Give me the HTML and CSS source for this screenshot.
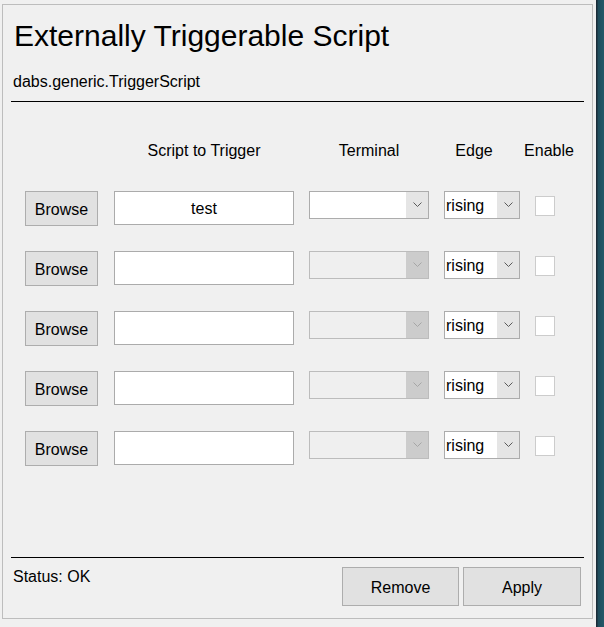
FILE: index.html
```html
<!DOCTYPE html>
<html>
<head>
<meta charset="utf-8">
<title>Externally Triggerable Script</title>
<link rel="stylesheet" href="styles.css">
</head>
<body>
<div class="window">
  <div class="title">Externally Triggerable Script</div>
  <div class="subtitle">dabs.generic.TriggerScript</div>
  <div class="rule"></div>

  <div class="headers">
    <div class="h h-script">Script to Trigger</div>
    <div class="h h-terminal">Terminal</div>
    <div class="h h-edge">Edge</div>
    <div class="h h-enable">Enable</div>
  </div>

  <div class="rows">
    <button class="btn browse">Browse</button>
    <input class="field" type="text" value="test">
    <div class="combo"><span class="combo-text"></span><span class="combo-arrow"><svg width="9" height="5" viewBox="0 0 9 5"><path d="M0.5 0.5 L4.5 4.5 L8.5 0.5" fill="none" stroke="#5a5a5a" stroke-width="1"/></svg></span></div>
    <div class="combo"><span class="combo-text">rising</span><span class="combo-arrow"><svg width="9" height="5" viewBox="0 0 9 5"><path d="M0.5 0.5 L4.5 4.5 L8.5 0.5" fill="none" stroke="#5a5a5a" stroke-width="1"/></svg></span></div>
    <input class="check" type="checkbox">

    <button class="btn browse">Browse</button>
    <input class="field" type="text" value="">
    <div class="combo disabled"><span class="combo-text"></span><span class="combo-arrow"><svg width="9" height="5" viewBox="0 0 9 5"><path d="M0.5 0.5 L4.5 4.5 L8.5 0.5" fill="none" stroke="#a6a6a6" stroke-width="1"/></svg></span></div>
    <div class="combo"><span class="combo-text">rising</span><span class="combo-arrow"><svg width="9" height="5" viewBox="0 0 9 5"><path d="M0.5 0.5 L4.5 4.5 L8.5 0.5" fill="none" stroke="#5a5a5a" stroke-width="1"/></svg></span></div>
    <input class="check" type="checkbox">

    <button class="btn browse">Browse</button>
    <input class="field" type="text" value="">
    <div class="combo disabled"><span class="combo-text"></span><span class="combo-arrow"><svg width="9" height="5" viewBox="0 0 9 5"><path d="M0.5 0.5 L4.5 4.5 L8.5 0.5" fill="none" stroke="#a6a6a6" stroke-width="1"/></svg></span></div>
    <div class="combo"><span class="combo-text">rising</span><span class="combo-arrow"><svg width="9" height="5" viewBox="0 0 9 5"><path d="M0.5 0.5 L4.5 4.5 L8.5 0.5" fill="none" stroke="#5a5a5a" stroke-width="1"/></svg></span></div>
    <input class="check" type="checkbox">

    <button class="btn browse">Browse</button>
    <input class="field" type="text" value="">
    <div class="combo disabled"><span class="combo-text"></span><span class="combo-arrow"><svg width="9" height="5" viewBox="0 0 9 5"><path d="M0.5 0.5 L4.5 4.5 L8.5 0.5" fill="none" stroke="#a6a6a6" stroke-width="1"/></svg></span></div>
    <div class="combo"><span class="combo-text">rising</span><span class="combo-arrow"><svg width="9" height="5" viewBox="0 0 9 5"><path d="M0.5 0.5 L4.5 4.5 L8.5 0.5" fill="none" stroke="#5a5a5a" stroke-width="1"/></svg></span></div>
    <input class="check" type="checkbox">

    <button class="btn browse">Browse</button>
    <input class="field" type="text" value="">
    <div class="combo disabled"><span class="combo-text"></span><span class="combo-arrow"><svg width="9" height="5" viewBox="0 0 9 5"><path d="M0.5 0.5 L4.5 4.5 L8.5 0.5" fill="none" stroke="#a6a6a6" stroke-width="1"/></svg></span></div>
    <div class="combo"><span class="combo-text">rising</span><span class="combo-arrow"><svg width="9" height="5" viewBox="0 0 9 5"><path d="M0.5 0.5 L4.5 4.5 L8.5 0.5" fill="none" stroke="#5a5a5a" stroke-width="1"/></svg></span></div>
    <input class="check" type="checkbox">
  </div>

  <div class="footer">
    <div class="rule"></div>
    <div class="footer-row">
      <div class="status">Status: OK</div>
      <div class="actions">
        <button class="btn action">Remove</button>
        <button class="btn action">Apply</button>
      </div>
    </div>
  </div>
</div>
<div class="strip"></div>
</body>
</html>
```

FILE: styles.css
```css
html, body {
  margin: 0;
  padding: 0;
  background: #f0f0f0;
}

body {
  display: flex;
  align-items: flex-start;
  width: 604px;
  height: 627px;
  overflow: hidden;
  font-family: "Liberation Sans", Arial, sans-serif;
  font-size: 16px;
  color: #000;
}

.window {
  box-sizing: border-box;
  margin: 4px 0 0 2px;
  width: 591px;
  height: 615px;
  border: 1px solid #bdbdbd;
  display: flex;
  flex-direction: column;
  padding: 0 8px 12px 8px;
}

.strip {
  margin-left: 3px;
  width: 8px;
  height: 627px;
  background: linear-gradient(to right, #1b2c38 0, #1b2c38 1px, #1f4c5c 2px, #235868 100%);
}

.title {
  margin-top: 13px;
  padding-left: 3px;
  font-size: 30px;
  line-height: 35px;
}

.subtitle {
  margin-top: 20px;
  padding-left: 2px;
  line-height: 18px;
}

.rule {
  height: 1px;
  background: #000;
}

.window > .rule {
  margin-top: 10px;
}

.headers {
  display: flex;
  margin-top: 40px;
  line-height: 18px;
  padding-left: 103px;
}

.h {
  text-align: center;
  white-space: nowrap;
}

.h-script { width: 180px; }
.h-terminal { width: 120px; margin-left: 15px; }
.h-edge { width: 60px; margin-left: 15px; }
.h-enable { width: 50px; margin-left: 20px; }

.rows {
  display: grid;
  grid-template-columns: 74px 180px 120px 76px 20px;
  grid-auto-rows: 35px;
  column-gap: 15px;
  row-gap: 25px;
  margin-top: 31px;
  padding-left: 14px;
  align-items: start;
}

.btn {
  box-sizing: border-box;
  margin: 0;
  padding: 0;
  background: #e1e1e1;
  border: 1px solid #adadad;
  font-family: "Liberation Sans", Arial, sans-serif;
  font-size: 16px;
  color: #000;
}

.browse {
  width: 73px;
  height: 35px;
  padding-top: 2px;
}

.field {
  box-sizing: border-box;
  margin: 0;
  width: 180px;
  height: 34px;
  padding: 1px 0 0 0;
  border: 1px solid #ababab;
  background: #fff;
  text-align: center;
  font-family: "Liberation Sans", Arial, sans-serif;
  font-size: 16px;
  color: #000;
  outline: none;
}

.combo {
  box-sizing: border-box;
  height: 28px;
  border: 1px solid #acacac;
  background: #fff;
  display: flex;
}

.combo-text {
  flex: 1;
  padding: 2px 0 0 1px;
  line-height: 24px;
  white-space: nowrap;
}

.combo-arrow {
  width: 22px;
  background: #e5e5e5;
  display: flex;
  align-items: center;
  justify-content: center;
}

.combo-arrow svg {
  display: block;
  margin-top: -1px;
}

.combo.disabled {
  border-color: #bcbcbc;
  background: #efefef;
}

.combo.disabled .combo-arrow {
  background: #cccccc;
}

.check {
  -webkit-appearance: none;
  appearance: none;
  box-sizing: border-box;
  margin: 5px 0 0 0;
  width: 20px;
  height: 20px;
  border: 1px solid #cccccc;
  background: #fff;
}

.footer {
  margin-top: auto;
}

.footer-row {
  display: flex;
  justify-content: space-between;
  align-items: flex-start;
  margin-top: 9px;
}

.status {
  padding: 1px 0 0 2px;
  line-height: 18px;
}

.actions {
  display: flex;
  gap: 4px;
  margin-right: 3px;
}

.action {
  width: 117px;
  height: 39px;
  padding-top: 3px;
}

.action + .action {
  width: 118px;
}
```
